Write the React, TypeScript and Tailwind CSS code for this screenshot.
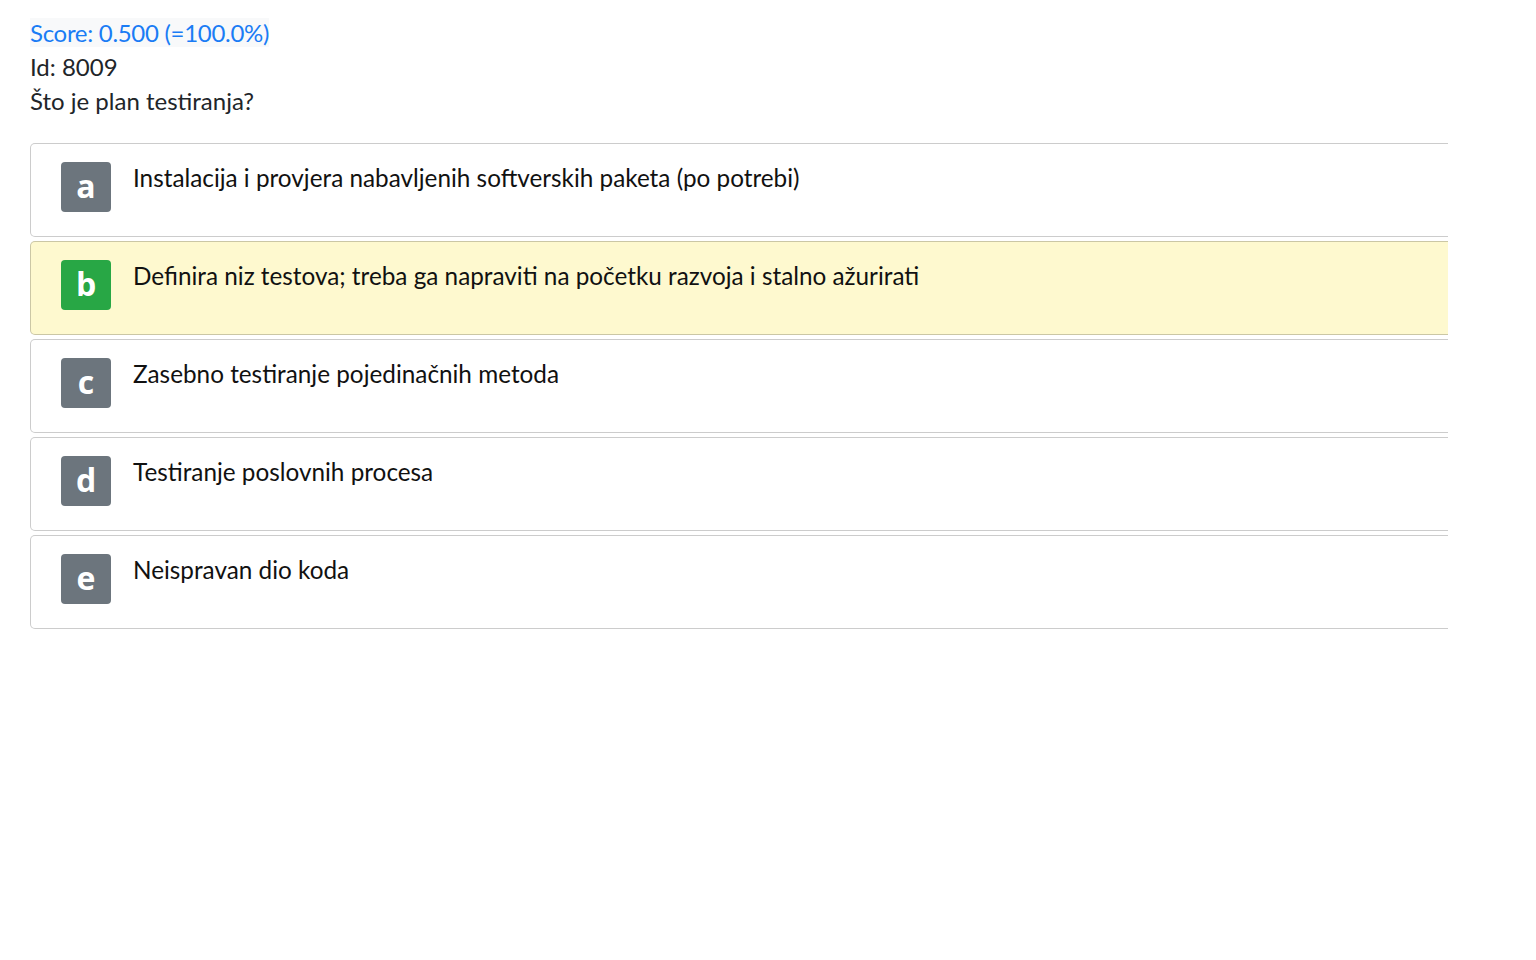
const options = [
  { key: "a", text: "Instalacija i provjera nabavljenih softverskih paketa (po potrebi)", correct: false },
  { key: "b", text: "Definira niz testova; treba ga napraviti na početku razvoja i stalno ažurirati", correct: true },
  { key: "c", text: "Zasebno testiranje pojedinačnih metoda", correct: false },
  { key: "d", text: "Testiranje poslovnih procesa", correct: false },
  { key: "e", text: "Neispravan dio koda", correct: false },
];

export default function App() {
  return (
    <main
      className="min-h-screen bg-white pl-[30px] pt-[16px] text-[24px] leading-[34px] text-[#212529]"
      style={{ fontFamily: "Lato, 'Noto Sans', sans-serif" }}
    >
      <div>
        <span className="bg-[#f8f9fa] tracking-[-0.3px] text-[#1a7cf5]">Score: 0.500 (=100.0%)</span>
      </div>
      <div>Id: 8009</div>
      <div>Što je plan testiranja?</div>

      <div className="mt-[25px] flex w-[1418px] flex-col gap-[4px] overflow-hidden">
        {options.map((o) => (
          <div
            key={o.key}
            className={
              o.correct
                ? "flex w-[1440px] items-start gap-[22px] rounded-[5px] border border-black/20 bg-[#fef9cf] pb-[24px] pl-[30px] pt-[18px]"
                : "flex w-[1440px] items-start gap-[22px] rounded-[5px] border border-black/20 bg-white pb-[24px] pl-[30px] pt-[18px]"
            }
          >
            <div
              className={
                o.correct
                  ? "flex h-[50px] w-[50px] shrink-0 items-center justify-center rounded-[4px] bg-[#28a745] font-['Open_Sans',sans-serif] text-[32px] font-bold leading-none text-white"
                  : "flex h-[50px] w-[50px] shrink-0 items-center justify-center rounded-[4px] bg-[#6c757d] font-['Open_Sans',sans-serif] text-[32px] font-bold leading-none text-white"
              }
            >
              <span className="-mt-[3px]">{o.key}</span>
            </div>
            <div className="-mt-[1px] text-[24.3px] text-[#111]">{o.text}</div>
          </div>
        ))}
      </div>
    </main>
  );
}
